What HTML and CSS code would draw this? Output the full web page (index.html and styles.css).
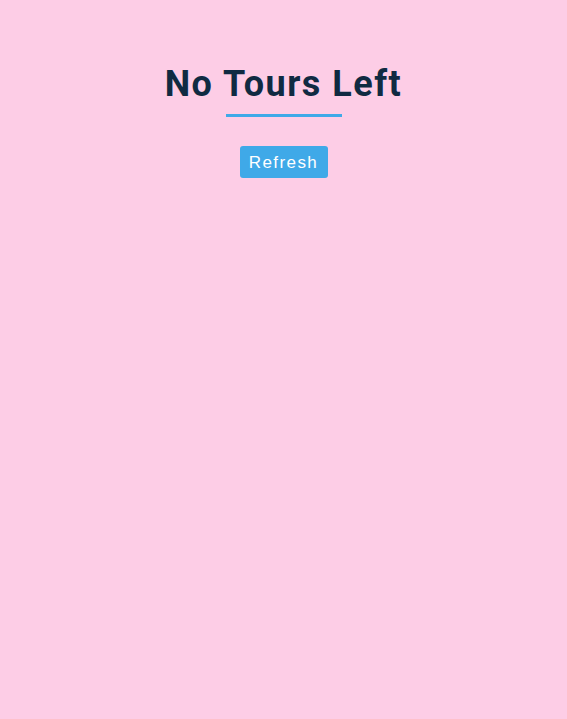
FILE: index.html
```html
<!DOCTYPE html>
<html lang="en">
<head>
<meta charset="utf-8">
<title>Tours</title>
<link rel="stylesheet" href="styles.css">
</head>
<body>
<main class="page">
  <section class="empty">
    <div class="title">
      <h2 class="title-text">No Tours Left</h2>
      <div class="underline"></div>
    </div>
    <button class="btn" type="button">Refresh</button>
  </section>
</main>
</body>
</html>
```

FILE: styles.css
```css
* { box-sizing: border-box; }
html, body { margin: 0; padding: 0; }
body {
  background: #fdcde6;
  min-height: 719px;
  font-family: "Liberation Sans", Arial, sans-serif;
}
.page {
  padding-top: 62px;
}
.empty {
  display: flex;
  flex-direction: column;
  align-items: center;
}
.title {
  display: flex;
  flex-direction: column;
  align-items: center;
}
.title-text {
  margin: 0;
  font-family: Roboto, "Liberation Sans", sans-serif;
  font-weight: 700;
  font-size: 36px;
  line-height: 44px;
  letter-spacing: 1.5px;
  color: #102a42;
}
.underline {
  width: 116px;
  height: 3px;
  background: #3fa9e8;
  margin-top: 8px;
}
.btn {
  margin-top: 29px;
  background: #3fa9e8;
  color: #fff;
  border: none;
  border-radius: 3px;
  font-family: "Liberation Sans", Arial, sans-serif;
  font-size: 17px;
  letter-spacing: 1.4px;
  padding: 2px 0 0;
  height: 32px;
  width: 88px;
}
```
